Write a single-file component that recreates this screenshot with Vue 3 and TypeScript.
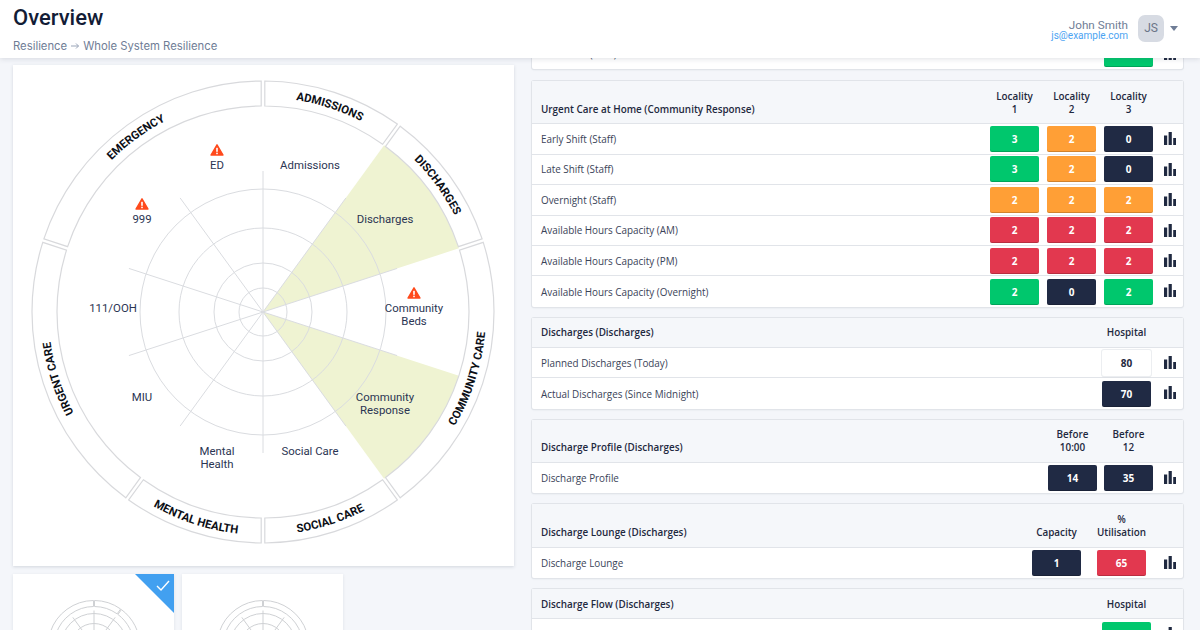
<script setup lang="ts">
type Tone = 'green' | 'orange' | 'navy' | 'red' | 'plain'
interface Cell { value: string; tone: Tone }
interface Row { label: string; cells: Cell[] }
interface Card { title: string; cols: string[][]; rows: Row[]; variant: string }

const c = (value: string, tone: Tone): Cell => ({ value, tone })

const cards: Card[] = [
  {
    title: 'Staffing (Staff)', cols: [['Hospital']], variant: '',
    rows: [{ label: 'Total Shift (Staff)', cells: [c('3', 'green')] }],
  },
  {
    title: 'Urgent Care at Home (Community Response)', variant: '',
    cols: [['Locality', '1'], ['Locality', '2'], ['Locality', '3']],
    rows: [
      { label: 'Early Shift (Staff)', cells: [c('3', 'green'), c('2', 'orange'), c('0', 'navy')] },
      { label: 'Late Shift (Staff)', cells: [c('3', 'green'), c('2', 'orange'), c('0', 'navy')] },
      { label: 'Overnight (Staff)', cells: [c('2', 'orange'), c('2', 'orange'), c('2', 'orange')] },
      { label: 'Available Hours Capacity (AM)', cells: [c('2', 'red'), c('2', 'red'), c('2', 'red')] },
      { label: 'Available Hours Capacity (PM)', cells: [c('2', 'red'), c('2', 'red'), c('2', 'red')] },
      { label: 'Available Hours Capacity (Overnight)', cells: [c('2', 'green'), c('0', 'navy'), c('2', 'green')] },
    ],
  },
  {
    title: 'Discharges (Discharges)', cols: [['Hospital']], variant: 'narrow',
    rows: [
      { label: 'Planned Discharges (Today)', cells: [c('80', 'plain')] },
      { label: 'Actual Discharges (Since Midnight)', cells: [c('70', 'navy')] },
    ],
  },
  {
    title: 'Discharge Profile (Discharges)', cols: [['Before', '10:00'], ['Before', '12']], variant: 'tight',
    rows: [{ label: 'Discharge Profile', cells: [c('14', 'navy'), c('35', 'navy')] }],
  },
  {
    title: 'Discharge Lounge (Discharges)', cols: [['Capacity'], ['%', 'Utilisation']], variant: 'wide',
    rows: [{ label: 'Discharge Lounge', cells: [c('1', 'navy'), c('65', 'red')] }],
  },
  {
    title: 'Discharge Flow (Discharges)', cols: [['Hospital']], variant: 'narrow',
    rows: [{ label: 'Discharge Flow', cells: [c('12', 'green')] }],
  },
]

const pt = (r: number, deg: number): string => {
  const a = (deg * Math.PI) / 180
  return `${(r * Math.sin(a)).toFixed(2)} ${(-r * Math.cos(a)).toFixed(2)}`
}

const segment = (R: number, r: number, a1: number, a2: number, off: number): string => {
  const dO = (Math.asin(off / R) * 180) / Math.PI
  const dI = (Math.asin(off / r) * 180) / Math.PI
  const large = a2 - a1 > 180 ? 1 : 0
  return `M${pt(R, a1 + dO)} A${R} ${R} 0 ${large} 1 ${pt(R, a2 - dO)} L${pt(r, a2 - dI)} A${r} ${r} 0 ${large} 0 ${pt(r, a1 + dI)} Z`
}

const wedge = (R: number, a1: number, a2: number): string =>
  `M0 0 L${pt(R, a1)} A${R} ${R} 0 0 1 ${pt(R, a2)} Z`

const spokes = (len: number) =>
  Array.from({ length: 10 }, (_, i) => i * 36)
    .map((a) => `M0 0 L${pt(len, a)}`)
    .join(' ')

const segAngles: [number, number][] = [[0, 36], [36, 72], [72, 144], [144, 180], [180, 216], [216, 288], [288, 360]]
const segPaths = segAngles.map(([a, b]) => segment(231, 206, a, b, 1.8))
const rings = [24, 49, 84, 123]
const spokePath = spokes(141)
const wedges = [wedge(206, 36, 72), wedge(206, 108, 144)]

interface ArcLabel { id: string; text: string; d: string }
const arc = (id: string, text: string, mid: number, cw: boolean): ArcLabel => {
  const r = cw ? 214.5 : 223
  const s = mid - 70
  const e = mid + 70
  const d = cw
    ? `M${pt(r, s)} A${r} ${r} 0 0 1 ${pt(r, e)}`
    : `M${pt(r, e)} A${r} ${r} 0 0 0 ${pt(r, s)}`
  return { id, text, d }
}
const arcLabels: ArcLabel[] = [
  arc('arc-adm', 'ADMISSIONS', 18, true),
  arc('arc-dis', 'DISCHARGES', 54, true),
  arc('arc-com', 'COMMUNITY CARE', 108, false),
  arc('arc-soc', 'SOCIAL CARE', 162, false),
  arc('arc-men', 'MENTAL HEALTH', 198, false),
  arc('arc-urg', 'URGENT CARE', 252, true),
  arc('arc-eme', 'EMERGENCY', 324, true),
]

interface Lbl { x: number; y: number; lines: string[]; alert?: boolean }
const labels: Lbl[] = [
  { x: 47, y: -147, lines: ['Admissions'] },
  { x: 122, y: -93, lines: ['Discharges'] },
  { x: 151, y: -4, lines: ['Community', 'Beds'], alert: true },
  { x: 122, y: 85, lines: ['Community', 'Response'] },
  { x: 47, y: 139, lines: ['Social Care'] },
  { x: -46, y: 139, lines: ['Mental', 'Health'] },
  { x: -121, y: 85, lines: ['MIU'] },
  { x: -150, y: -4, lines: ['111/OOH'] },
  { x: -121, y: -93, lines: ['999'], alert: true },
  { x: -46, y: -147, lines: ['ED'], alert: true },
]

const thumbRings = [23, 33]
const thumbs = [
  {
    selected: true,
    segs: [[0, 36], [36, 144], [144, 180], [180, 216], [216, 288], [288, 360]].map(([a, b]) => segment(46, 40, a, b, 0.5)),
  },
  {
    selected: false,
    segs: [[0, 144], [144, 180], [180, 216], [216, 288], [288, 360]].map(([a, b]) => segment(46, 40, a, b, 0.5)),
  },
]
const thumbSpokes = spokes(36)
</script>

<template>
  <div class="app">
    <header class="topbar">
      <div class="heading">
        <h1 class="title">Overview</h1>
        <nav class="crumbs">
          <span>Resilience</span>
          <svg class="crumb-arrow" width="10" height="8" viewBox="0 0 10 8" aria-hidden="true">
            <path d="M1 4h7.5M6 1.5 8.5 4 6 6.5" fill="none" stroke="#9aa5b8" stroke-width="1" />
          </svg>
          <span>Whole System Resilience</span>
        </nav>
      </div>
      <div class="user">
        <div class="user-text">
          <div class="user-name">John Smith</div>
          <div class="user-mail">js@example.com</div>
        </div>
        <div class="avatar">JS</div>
        <span class="caret"></span>
      </div>
    </header>

    <main class="main">
      <section class="left">
        <div class="chart-card">
          <svg class="chart" width="501" height="501" viewBox="-250 -247 501 501">
            <defs>
              <path v-for="a in arcLabels" :id="a.id" :key="a.id" :d="a.d" />
            </defs>
            <path v-for="(w, i) in wedges" :key="'w' + i" :d="w" fill="#eff3d2" />
            <circle v-for="r in rings" :key="r" :r="r" class="line" />
            <path :d="spokePath" class="line" />
            <path v-for="(s, i) in segPaths" :key="'s' + i" :d="s" class="seg" />
            <text v-for="a in arcLabels" :key="'t' + a.id" class="arc-text">
              <textPath :href="'#' + a.id" startOffset="50%" text-anchor="middle">{{ a.text }}</textPath>
            </text>
            <g v-for="l in labels" :key="l.lines[0]" :transform="`translate(${l.x} ${l.y})`">
              <g v-if="l.alert" transform="translate(0 -15)">
                <path d="M0 -5.2 L6 5 H-6 Z" fill="#ff4a1c" stroke="#ff4a1c" stroke-width="1.4" stroke-linejoin="round" />
                <rect x="-0.8" y="-2.2" width="1.6" height="4" fill="#fff" />
                <rect x="-0.8" y="2.7" width="1.6" height="1.5" fill="#fff" />
              </g>
              <text
                v-for="(line, i) in l.lines"
                :key="line"
                class="sector-text"
                text-anchor="middle"
                :y="i * 12.5 + 4"
              >{{ line }}</text>
            </g>
          </svg>
        </div>
        <div class="thumbs">
          <div v-for="(t, i) in thumbs" :key="i" class="thumb">
            <svg class="thumb-chart" width="100" height="100" viewBox="-50 -46.5 100 100">
              <path v-for="(s, j) in t.segs" :key="j" :d="s" class="thumb-line" />
              <circle v-for="r in thumbRings" :key="r" :r="r" class="thumb-line" />
              <path :d="thumbSpokes" class="thumb-line" />
            </svg>
            <div v-if="t.selected" class="corner">
              <svg class="check" width="14" height="11" viewBox="0 0 14 11" aria-hidden="true">
                <path d="M1 6 5 10 13 1" fill="none" stroke="#fff" stroke-width="1.4" />
              </svg>
            </div>
          </div>
        </div>
      </section>

      <section class="right">
        <article v-for="card in cards" :key="card.title" class="card" :class="card.variant">
          <div class="card-head">
            <div class="card-title">{{ card.title }}</div>
            <div class="cols head-cols">
              <div v-for="col in card.cols" :key="col.join()" class="col">
                <div v-for="line in col" :key="line">{{ line }}</div>
              </div>
            </div>
          </div>
          <div v-for="row in card.rows" :key="row.label" class="row">
            <div class="row-label">{{ row.label }}</div>
            <div class="cols">
              <div v-for="(cell, i) in row.cells" :key="i" class="cell" :class="cell.tone">{{ cell.value }}</div>
            </div>
            <svg class="bars" width="12" height="13" viewBox="0 0 12 13" aria-hidden="true">
              <rect x="0" y="3.5" width="3.2" height="9.5" fill="#1f2940" />
              <rect x="4.6" y="0" width="3.2" height="13" fill="#1f2940" />
              <rect x="9.2" y="6" width="2.8" height="7" fill="#1f2940" />
            </svg>
          </div>
        </article>
      </section>
    </main>
  </div>
</template>

<style>
html, body { margin: 0; padding: 0; }
</style>

<style scoped>
.app {
  width: 1200px;
  height: 630px;
  overflow: hidden;
  background: #f4f6fa;
  display: flex;
  flex-direction: column;
}
.topbar {
  flex: none;
  height: 58px;
  position: relative;
  z-index: 2;
  background: #fff;
  box-shadow: 0 1px 5px rgba(60, 70, 90, 0.16);
  display: flex;
  justify-content: space-between;
  align-items: flex-start;
  padding: 0 22px 0 13px;
  box-sizing: border-box;
}
.title {
  margin: 4px 0 0;
  font: 500 22px/28px Roboto, sans-serif;
  color: #131c36;
}
.crumbs {
  margin-top: 6px;
  display: flex;
  align-items: center;
  gap: 3px;
  font: 400 11.3px/16px Inter, sans-serif;
  color: #6f7d96;
}
.user {
  display: flex;
  align-items: center;
  margin-top: 15px;
}
.user-text {
  text-align: right;
  padding-top: 2px;
}
.user-name {
  font: 400 11.7px/12px Roboto, sans-serif;
  color: #6f7d96;
}
.user-mail {
  font: 400 10px/10px Roboto, sans-serif;
  color: #4ba3f2;
}
.avatar {
  width: 26px;
  height: 27px;
  margin-left: 10px;
  border-radius: 7px;
  background: #d7dbe3;
  color: #6b7588;
  font: 400 12px/27px Roboto, sans-serif;
  text-align: center;
}
.caret {
  margin-left: 6px;
  width: 0;
  height: 0;
  border-left: 4px solid transparent;
  border-right: 4px solid transparent;
  border-top: 5px solid #6f7d96;
}
.main {
  flex: 1;
  display: flex;
  align-items: flex-start;
  padding-left: 13px;
}
.left {
  flex: none;
  width: 501px;
  padding-top: 7px;
}
.chart-card {
  height: 501px;
  background: #fff;
  box-shadow: 0 1px 3px rgba(60, 70, 90, 0.18);
}
.chart { display: block; }
.line { fill: none; stroke: #dadce0; stroke-width: 1; }
.seg { fill: none; stroke: #d8d9dc; stroke-width: 1.2; }
.arc-text {
  font: 700 11.4px Roboto, sans-serif;
  fill: #0c0f16;
}
.sector-text {
  font: 400 11.4px Roboto, sans-serif;
  fill: #2b3553;
}
.thumbs {
  display: flex;
  gap: 8px;
  margin-top: 8px;
}
.thumb {
  position: relative;
  width: 161px;
  height: 120px;
  background: #fff;
  box-shadow: 0 1px 3px rgba(60, 70, 90, 0.12);
  overflow: hidden;
}
.thumb-chart {
  display: block;
  margin: 26px auto 0;
}
.thumb-line { fill: none; stroke: #cfd1d4; stroke-width: 1; }
.corner {
  position: absolute;
  top: 0;
  right: 0;
  width: 39px;
  height: 39px;
  background: #42a0f0;
  clip-path: polygon(0 0, 100% 0, 100% 100%);
}
.check {
  position: absolute;
  top: 6px;
  right: 4px;
}
.right {
  flex: none;
  width: 651px;
  margin-left: 18px;
  margin-top: -49.7px;
  display: flex;
  flex-direction: column;
  gap: 10.9px;
  font-family: "Open Sans", sans-serif;
}
.card {
  --gap: 8px;
  --trail: 30px;
  background: #fff;
  border-radius: 2px;
  box-shadow: 0 0 0 1px #e1e4e9, 0 1px 2px rgba(60, 70, 90, 0.12);
}
.card:first-child { margin-bottom: 1px; }
.card.tight { --gap: 7px; }
.card.narrow { --trail: 32px; }
.card.wide { --gap: 16px; --trail: 37px; }
.card-head {
  display: flex;
  align-items: flex-end;
  padding: 8.6px var(--trail) 7.8px 9px;
  background: #f5f7fa;
  border-bottom: 1px solid #e1e4e9;
  font-size: 9.9px;
  font-weight: 600;
  line-height: 13px;
  color: #1f2940;
}
.card-title { flex: 1; }
.cols {
  display: flex;
  gap: var(--gap);
}
.head-cols { align-items: flex-end; }
.col {
  width: 49px;
  text-align: center;
  white-space: nowrap;
}
.row {
  position: relative;
  height: 30.4px;
  box-sizing: border-box;
  display: flex;
  align-items: center;
  padding: 0 var(--trail) 0 9px;
  border-bottom: 1px solid #e1e4e9;
}
.row:last-child { border-bottom: 0; }
.row-label {
  flex: 1;
  font-size: 9.9px;
  color: #3a4358;
}
.cell {
  width: 49px;
  height: 26px;
  border-radius: 2px;
  font-size: 10px;
  font-weight: 700;
  line-height: 26px;
  text-align: center;
  color: #fff;
  box-shadow: inset 0 -1px 0 rgba(0, 0, 0, 0.18);
}
.cell.green { background: #00c76d; }
.cell.orange { background: #ff9f36; }
.cell.navy { background: #202a44; }
.cell.red { background: #e2384f; }
.cell.plain {
  background: #fff;
  color: #1f2940;
  box-shadow: 0 0 0 1px #eceef1, 0 1px 1px rgba(0, 0, 0, 0.14);
}
.bars {
  position: absolute;
  right: 7px;
  top: 8px;
}
</style>
